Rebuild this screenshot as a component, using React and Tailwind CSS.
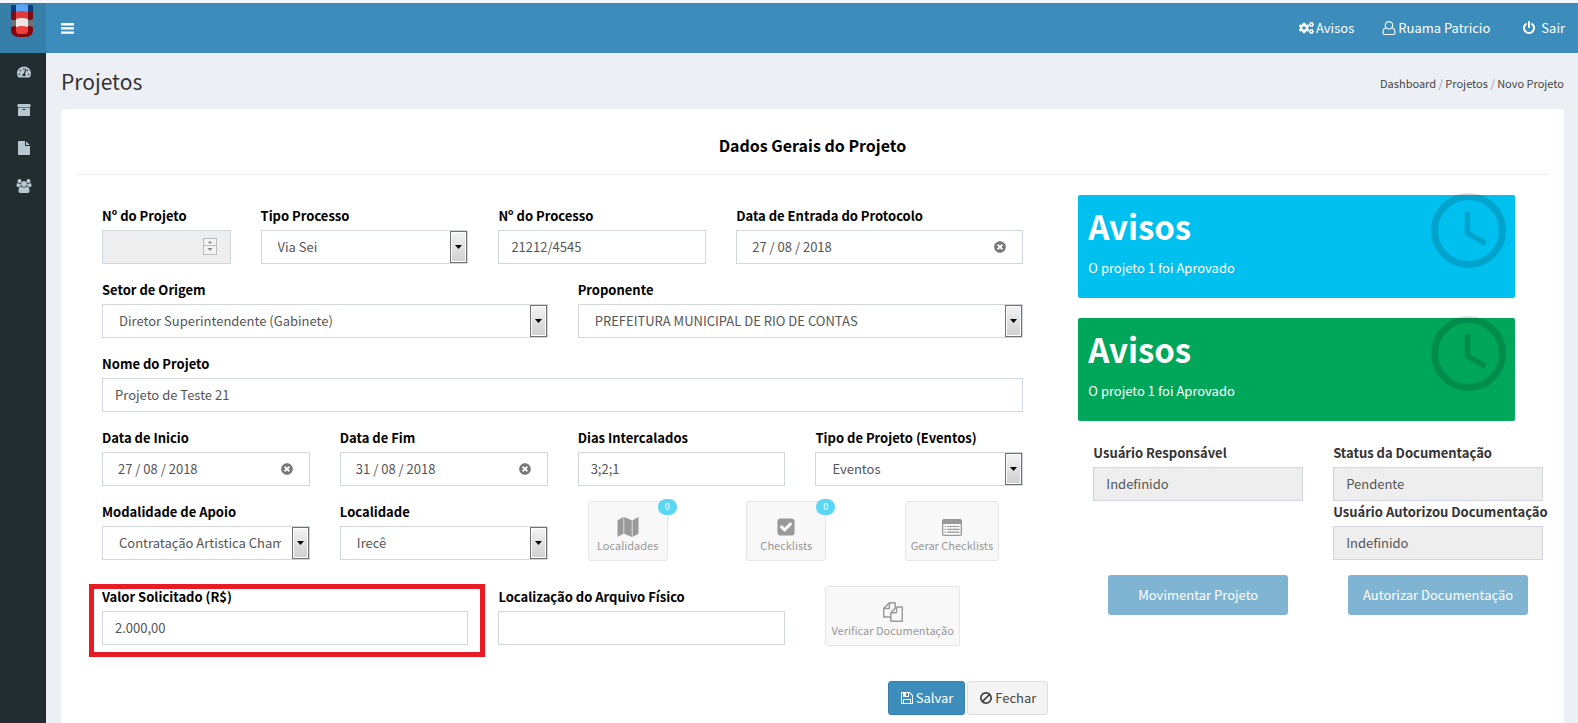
import { useState } from "react";
import { FaTachometerAlt, FaCogs, FaTimesCircle } from "react-icons/fa";

const paths = {
  power: "M1664 896q0 156-61 298t-164 245-245 164-298 61-298-61-245-164-164-245-61-298q0-182 80.5-343t226.5-270q43-32 95.500-25t83.500 50q32 42 24.500 94.500t-49.500 84.500q-98 74-151.500 181t-53.500 228q0 104 40.500 198.500t109.500 163.500 163.500 109.500 198.500 40.500 198.500-40.500 163.500-109.500 109.500-163.500 40.500-198.500q0-121-53.500-228t-151.500-181q-42-32-49.500-84.500t24.500-94.500q31-43 84-50t95 25q146 109 226.500 270t80.500 343zm-640-768v640q0 52-38 90t-90 38-90-38-38-90v-640q0-52 38-90t90-38 90 38 38 90z",
  files: "M1696 384q40 0 68 28t28 68v1216q0 40-28 68t-68 28h-960q-40 0-68-28t-28-68v-288h-544q-40 0-68-28t-28-68v-672q0-40 20-88t48-76l408-408q28-28 76-48t88-20h416q40 0 68 28t28 68v328q68-40 128-40h416zm-544 213l-299 299h299v-299zm-640-384l-299 299h299v-299zm196 647l316-316v-416h-384v416q0 40-28 68t-68 28h-416v640h512v-256q0-40 20-88t48-76zm956 804v-1152h-384v416q0 40-28 68t-68 28h-416v640h896z",
  floppy: "M512 1536h768v-384h-768v384zm896 0h128v-896q0-14-10-38.500t-20-34.500l-281-281q-10-10-34-20t-39-10v416q0 40-28 68t-68 28h-576q-40 0-68-28t-28-68v-416h-128v1280h128v-416q0-40 28-68t68-28h832q40 0 68 28t28 68v416zm-384-928v-320q0-13-9.500-22.500t-22.500-9.500h-192q-13 0-22.500 9.500t-9.500 22.500v320q0 13 9.500 22.500t22.500 9.500h192q13 0 22.500-9.500t9.500-22.500zm640 32v928q0 40-28 68t-68 28h-1344q-40 0-68-28t-28-68v-1344q0-40 28-68t68-28h928q40 0 88 20t76 48l280 280q28 28 48 76t20 88z",
  ban: "M1440 893q0-161-87-295l-754 753q137 89 297 89 111 0 211.500-43.500t173.500-116.500 116-174.500 43-212.500zm-999 299l755-754q-135-91-300-91-148 0-273 73t-198 199-73 274q0 162 89 299zm1223-299q0 157-61 300t-163.500 246-245 164-298.500 61-298.500-61-245-164-163.500-246-61-300 61-299.500 163.500-245.500 245-164 298.500-61 298.500 61 245 164 163.500 245.500 61 299.500z",
  check: "M813 1299l614-614q19-19 19-45t-19-45l-102-102q-19-19-45-19t-45 19l-467 467-211-211q-19-19-45-19t-45 19l-102 102q-19 19-19 45t19 45l358 358q19 19 45 19t45-19zm851-883v960q0 119-84.500 203.500t-203.500 84.500h-960q-119 0-203.500-84.500t-84.500-203.500v-960q0-119 84.500-203.500t203.500-84.500h960q119 0 203.500 84.500t84.500 203.500z",
  archive: "M1088 832q0-26-19-45t-45-19h-256q-26 0-45 19t-19 45 19 45 45 19h256q26 0 45-19t19-45zm576-192v960q0 26-19 45t-45 19h-1408q-26 0-45-19t-19-45v-960q0-26 19-45t45-19h1408q26 0 45 19t19 45zm64-448v256q0 26-19 45t-45 19h-1536q-26 0-45-19t-19-45v-256q0-26 19-45t45-19h1536q26 0 45 19t19 45z",
  file: "M1152 512v-472q22 14 36 28l408 408q14 14 28 36h-472zm-128 32q0 40 28 68t68 28h544v1056q0 40-28 68t-68 28h-1344q-40 0-68-28t-28-68v-1600q0-40 28-68t68-28h800v544z",
  users: "M657 896q-162 5-265 128h-134q-82 0-138-40.500t-56-118.500q0-353 124-353 6 0 43.500 21t97.500 42.500 119 21.500q67 0 133-23-5 37-5 66 0 139 81 256zm1071 637q0 120-73 189.500t-194 69.500h-874q-121 0-194-69.500t-73-189.500q0-53 3.500-103.500t14-109 26.500-108.500 43-97.500 62-81 85.500-53.500 111.500-20q10 0 43 21.500t73 48 107 48 135 21.500 135-21.500 107-48 73-48 43-21.500q61 0 111.500 20t85.500 53.500 62 81 43 97.500 26.500 108.500 14 109 3.500 103.500zm-1024-1277q0 106-75 181t-181 75-181-75-75-181 75-181 181-75 181 75 75 181zm704 384q0 159-112.500 271.500t-271.500 112.500-271.500-112.500-112.500-271.500 112.500-271.500 271.500-112.500 271.500 112.500 112.500 271.500zm576 225q0 78-56 118.500t-138 40.500h-134q-103-123-265-128 81-117 81-256 0-29-5-66 66 23 133 23 59 0 119-21.500t97.500-42.500 43.500-21q124 0 124 353zm-128-609q0 106-75 181t-181 75-181-75-75-181 75-181 181-75 181 75 75 181z",
};

function Icon({ name, className, wide }) {
  return (
    <svg viewBox={wide ? "0 0 2048 1792" : "0 0 1792 1792"} fill="currentColor" className={className} aria-hidden="true">
      <path d={paths[name]} />
    </svg>
  );
}

function UserIcon() {
  return (
    <svg viewBox="0 0 14 14" className="h-3.5 w-3.5" fill="none" stroke="currentColor" strokeWidth="1.1" aria-hidden="true">
      <path d="M4.3 6.8C2 7.2 1 9.300 1 11.400 1 12.700 1.800 13.500 2.900 13.500h8.200c1.100 0 1.900-.8 1.900-2.100 0-2.100-1-4.200-3.300-4.600" />
      <circle cx="7" cy="4.300" r="3.700" />
    </svg>
  );
}

function MapIcon() {
  return (
    <svg viewBox="0 0 22 20" className="h-5 w-[22px]" fill="currentColor" aria-hidden="true">
      <path d="M.5 3.200 6.500 0v16.800L.5 20zM15.500 3.200 21.500 0v16.800L15.500 20z" />
      <path d="M7.200 0l7.600 3.200V20l-7.600-3.200z" />
    </svg>
  );
}

function ListIcon() {
  return (
    <svg viewBox="0 0 20 17" className="h-[17px] w-5" aria-hidden="true">
      <path
        fill="currentColor" fillRule="evenodd"
        d="M1.700 0h16.600Q20 0 20 1.700v13.600q0 1.700-1.700 1.700H1.700Q0 17 0 15.300V1.700Q0 0 1.700 0zM1.300 5v10.200q0 .5.5.5h16.400q.5 0 .5-.5V5z"
      />
      <path stroke="currentColor" strokeWidth="1.200" d="M2.600 7.500h1.300M5.200 7.500h12.200M2.600 10.300h1.300M5.200 10.300h12.200M2.600 13.100h1.300M5.200 13.100h12.200" />
    </svg>
  );
}

function Clock() {
  return (
    <svg viewBox="0 0 75 75" className="absolute -top-0.5 right-[9px] h-[75px] w-[75px] text-black/15" fill="none" stroke="currentColor" aria-hidden="true">
      <circle cx="37.500" cy="37.500" r="34" strokeWidth="7" />
      <path d="M36.500 18.500v21.500l18 10.500" strokeWidth="5.500" />
    </svg>
  );
}

function Logo() {
  return (
    <svg viewBox="0 0 24 33" className="h-[33px] w-6" role="img" aria-label="Logo">
      <path d="M2 1h20q1 0 1 1v7H1V2q0-1 1-1z" fill="#0b3a7e" />
      <path d="M1 8q11-3 22 0v6q0 2-2 2H3q-2 0-2-2z" fill="#7d0d14" />
      <path d="M1 16h22v7H1z" fill="#6f7078" />
      <path d="M1 24q0-2 5-2h12q5 0 5 2v2q0 7-8 7H9q-8 0-8-7z" fill="#86040c" />
      <path d="M6 1q6-2 12 0v7H6z" fill="#5ba4f5" />
      <path d="M6 8q6-2 12 0v7H6z" fill="#e2393c" />
      <path d="M6 15q6-2 12 0v8H6z" fill="#ece6e4" />
      <path d="M6 23q6-2 12 0v3q0 4-3 4H9q-3 0-3-4z" fill="#ec3f40" />
    </svg>
  );
}

const control = "block h-[34px] w-full border border-[#d2d6de] text-[13px] leading-5 text-[#555] outline-none";

function Field({ label, id, className = "", dark = true, children }) {
  return (
    <div className={`relative px-[15px] ${className}`}>
      <label htmlFor={id} className={`mb-1 block whitespace-nowrap pt-px text-[13px] font-bold leading-5 ${dark ? "text-black" : "text-[#333]"}`}>
        {label}
      </label>
      {children}
    </div>
  );
}

function TextField({ id, label, value = "", className, dark, disabled }) {
  return (
    <Field id={id} label={label} className={className} dark={dark}>
      <input id={id} type="text" defaultValue={value} disabled={disabled} className={`${control} px-3 pb-0.5 ${disabled ? "bg-[#eee]" : "bg-white"}`} />
    </Field>
  );
}

function DateField({ id, label, initial, className }) {
  const [value, setValue] = useState(initial);
  return (
    <Field id={id} label={label} className={className}>
      <div className="relative">
        <input id={id} type="text" value={value} onChange={(e) => setValue(e.target.value)} className={`${control} bg-white px-[15px] pb-0.5`} />
        <button type="button" aria-label="Limpar data" onClick={() => setValue("")} className="absolute right-[17px] top-[11px] text-[#777]">
          <FaTimesCircle className="h-3 w-3" />
        </button>
      </div>
    </Field>
  );
}

function SelectField({ id, label, option, className }) {
  return (
    <Field id={id} label={label} className={className}>
      <div className="relative">
        <select id={id} className={`${control} appearance-none overflow-hidden text-clip bg-white pl-4 pr-7`}>
          <option>{option}</option>
        </select>
        <span className="pointer-events-none absolute inset-y-px right-px flex w-[17px] items-center justify-center border border-[#707070] bg-linear-to-b from-[#f4f4f4] to-[#cfcfcf] ring-1 ring-inset ring-white">
          <svg viewBox="0 0 7 4" className="h-1 w-[7px]" aria-hidden="true"><path d="M0 0h7L3.500 4z" /></svg>
        </span>
      </div>
    </Field>
  );
}

function AppButton({ label, badge, children }) {
  return (
    <button type="button" disabled className="relative ml-[25px] flex h-[60px] min-w-20 flex-col items-center justify-end whitespace-nowrap rounded-[3px] border border-[#e6e6e6] bg-[#f8f8f8] px-[5px] pb-[7px] text-[11px] leading-4 text-[#999]">
      {badge && (
        <span className="absolute -right-2.5 -top-[3px] flex h-4 w-[19px] items-center justify-center rounded-full bg-[#5bd6f3] text-[9px] text-white">
          {badge}
        </span>
      )}
      <span className="flex h-5 items-center">{children}</span>
      {label}
    </button>
  );
}

function Notice({ color }) {
  return (
    <section className={`relative mb-5 mr-[43px] h-[103px] rounded-[2px] p-2.5 text-white ${color}`}>
      <h3 className="text-[33px] font-bold leading-[42px]">Avisos</h3>
      <p className="mt-[11px] text-[13px] leading-5">O projeto 1 foi Aprovado</p>
      <Clock />
    </section>
  );
}

const menu = [
  { name: "Dashboard", icon: <FaTachometerAlt className="h-3.5 w-3.5" /> },
  { name: "Processos", icon: <Icon name="archive" className="h-3.5 w-3.5" /> },
  { name: "Documentos", icon: <Icon name="file" className="h-3.5 w-3.5" /> },
  { name: "Usuários", icon: <Icon name="users" wide className="h-3.5 w-4" /> },
];

export default function App() {
  return (
    <div className="flex min-h-screen flex-col overflow-x-hidden bg-[#ecf0f5] font-['Source_Sans_Pro','Noto_Sans_CJK_SC',sans-serif] text-[13px] leading-5 text-[#333]">
      <header className="flex h-[53px] shrink-0 border-t-3 border-[#f3f7fb] bg-[#3c8dbc] text-white">
        <a href="#" className="flex w-[46px] items-start justify-center bg-[#367fa9] pr-[3px] pt-px">
          <Logo />
        </a>
        <button type="button" aria-label="Menu" className="flex w-[42px] items-center justify-center">
          <svg viewBox="0 0 13 11" className="h-[11px] w-[13px]" fill="currentColor" aria-hidden="true">
            <path d="M0 0h13v2.400H0zM0 4.200h13v2.400H0zM0 8.400h13v2.400H0z" />
          </svg>
        </button>
        <nav className="ml-auto flex items-center gap-7 pr-[13px]">
          <a href="#" className="flex items-center gap-0.5"><FaCogs className="h-4 w-[15px]" />Avisos</a>
          <a href="#" className="flex items-center gap-0.5"><UserIcon />Ruama Patricio</a>
          <a href="#" className="ml-1 flex items-center gap-[5px]"><Icon name="power" className="h-3.5 w-3.5" />Sair</a>
        </nav>
      </header>

      <div className="flex flex-1">
        <aside className="w-[46px] shrink-0 bg-[#222d32]">
          <nav className="flex flex-col text-[#b8c7ce]">
            {menu.map((m) => (
              <a key={m.name} href="#" aria-label={m.name} className="flex h-[38px] items-center justify-center pl-0.5">
                {m.icon}
              </a>
            ))}
          </nav>
        </aside>

        <main className="flex min-w-0 flex-1 flex-col pl-[15px] pr-3.5">
          <div className="flex h-14 items-center justify-between">
            <h1 className="text-[21px] leading-7">Projetos</h1>
            <div className="pt-1 text-[11px] text-[#444]">
              <a href="#">Dashboard</a> <span className="text-[#89a]">/</span> <a href="#">Projetos</a>{" "}
              <span className="text-[#89a]">/</span> <a href="#">Novo Projeto</a>
            </div>
          </div>

          <div className="flex-1 rounded-t-[4px] bg-white">
            <h2 className="mx-4 border-b border-[#eee] pb-[19px] pt-[26px] text-center text-base font-bold leading-5 text-black">
              Dados Gerais do Projeto
            </h2>

            <div className="grid grid-cols-[119fr_60fr] gap-10 pl-[26px] pr-1.5 pt-5">
              <form className="min-w-0 pt-2.5" onSubmit={(e) => e.preventDefault()}>
                <div className="grid grid-cols-12 gap-y-[15px]">
                  <Field id="numero" label="Nº do Projeto" className="col-span-2">
                    <div className="relative">
                      <input id="numero" type="text" inputMode="numeric" disabled className={`${control} bg-[#eee] px-3`} />
                      <span className="pointer-events-none absolute right-3.5 top-2 flex h-[17px] w-3.5 flex-col divide-y divide-[#bbb] border border-[#bbb] bg-[#f4f4f4] text-[#888]">
                        <svg viewBox="0 0 12 7" fill="currentColor" className="h-[7px] w-3" aria-hidden="true"><path d="M3.500 5h5L6 2z" /></svg>
                        <svg viewBox="0 0 12 7" fill="currentColor" className="h-[7px] w-3" aria-hidden="true"><path d="M3.500 2h5L6 5z" /></svg>
                      </span>
                    </div>
                  </Field>
                  <SelectField id="tipo-processo" label="Tipo Processo" option="Via Sei" className="col-span-3" />
                  <TextField id="processo" label="Nº do Processo" value="21212/4545" className="col-span-3" />
                  <DateField id="entrada" label="Data de Entrada do Protocolo" initial="27 / 08 / 2018" className="col-span-4" />

                  <SelectField id="setor" label="Setor de Origem" option="Diretor Superintendente (Gabinete)" className="col-span-6" />
                  <SelectField id="proponente" label="Proponente" option="PREFEITURA MUNICIPAL DE RIO DE CONTAS" className="col-span-6" />

                  <TextField id="nome" label="Nome do Projeto" value="Projeto de Teste 21" className="col-span-12" />

                  <DateField id="inicio" label="Data de Inicio" initial="27 / 08 / 2018" className="col-span-3" />
                  <DateField id="fim" label="Data de Fim" initial="31 / 08 / 2018" className="col-span-3" />
                  <TextField id="dias" label="Dias Intercalados" value="3;2;1" className="col-span-3" />
                  <SelectField id="tipo-projeto" label="Tipo de Projeto (Eventos)" option="Eventos" className="col-span-3" />

                  <SelectField id="modalidade" label="Modalidade de Apoio" option="Contratação Artistica Chamamento" className="col-span-3" />
                  <SelectField id="localidade" label="Localidade" option="Irecê" className="col-span-3" />
                  <div className="col-span-2 pb-2.5">
                    <AppButton label="Localidades" badge="0"><MapIcon /></AppButton>
                  </div>
                  <div className="col-span-2">
                    <AppButton label="Checklists" badge="0"><Icon name="check" className="h-5 w-5" /></AppButton>
                  </div>
                  <div className="col-span-2">
                    <AppButton label="Gerar Checklists"><ListIcon /></AppButton>
                  </div>

                  <TextField id="valor" label="Valor Solicitado (R$)" value="2.000,00" className="col-span-5 before:pointer-events-none before:absolute before:-bottom-[11px] before:-right-0.5 before:-top-0.5 before:left-0.5 before:border-5 before:border-[#e81c24]" />
                  <TextField id="arquivo" label="Localização do Arquivo Físico" className="col-span-4" />
                  <div className="col-span-3">
                    <AppButton label="Verificar Documentação"><Icon name="files" className="h-5 w-5" /></AppButton>
                  </div>
                </div>

                <div className="-mr-2.5 mt-[35px] flex justify-end gap-0.5 pb-2">
                  <button type="submit" className="flex h-[34px] items-center gap-0.5 rounded-[3px] border border-[#367fa9] bg-[#3c8dbc] px-[11px] text-white">
                    <Icon name="floppy" className="h-3.5 w-3.5" />Salvar
                  </button>
                  <button type="button" className="flex h-[34px] items-center gap-0.5 rounded-[3px] border border-[#ddd] bg-[#f4f4f4] px-[11px] text-[#444]">
                    <Icon name="ban" className="h-3.5 w-3.5" />Fechar
                  </button>
                </div>
              </form>

              <aside className="min-w-0">
                <Notice color="bg-[#00c0ef]" />
                <Notice color="bg-[#00a65a]" />
                <div className="grid grid-cols-2 pt-px">
                  <TextField id="responsavel" label="Usuário Responsável" value="Indefinido" dark={false} disabled />
                  <TextField id="status" label="Status da Documentação" value="Pendente" dark={false} disabled />
                  <TextField id="autorizou" label="Usuário Autorizou Documentação" value="Indefinido" dark={false} disabled className="col-start-2" />
                  <button type="button" disabled className="mx-[30px] mt-[15px] h-10 whitespace-nowrap rounded-[3px] bg-[#80b4d3] text-white">
                    Movimentar Projeto
                  </button>
                  <button type="button" disabled className="mx-[30px] mt-[15px] h-10 whitespace-nowrap rounded-[3px] bg-[#80b4d3] text-white">
                    Autorizar Documentação
                  </button>
                </div>
              </aside>
            </div>
          </div>
        </main>
      </div>
    </div>
  );
}
